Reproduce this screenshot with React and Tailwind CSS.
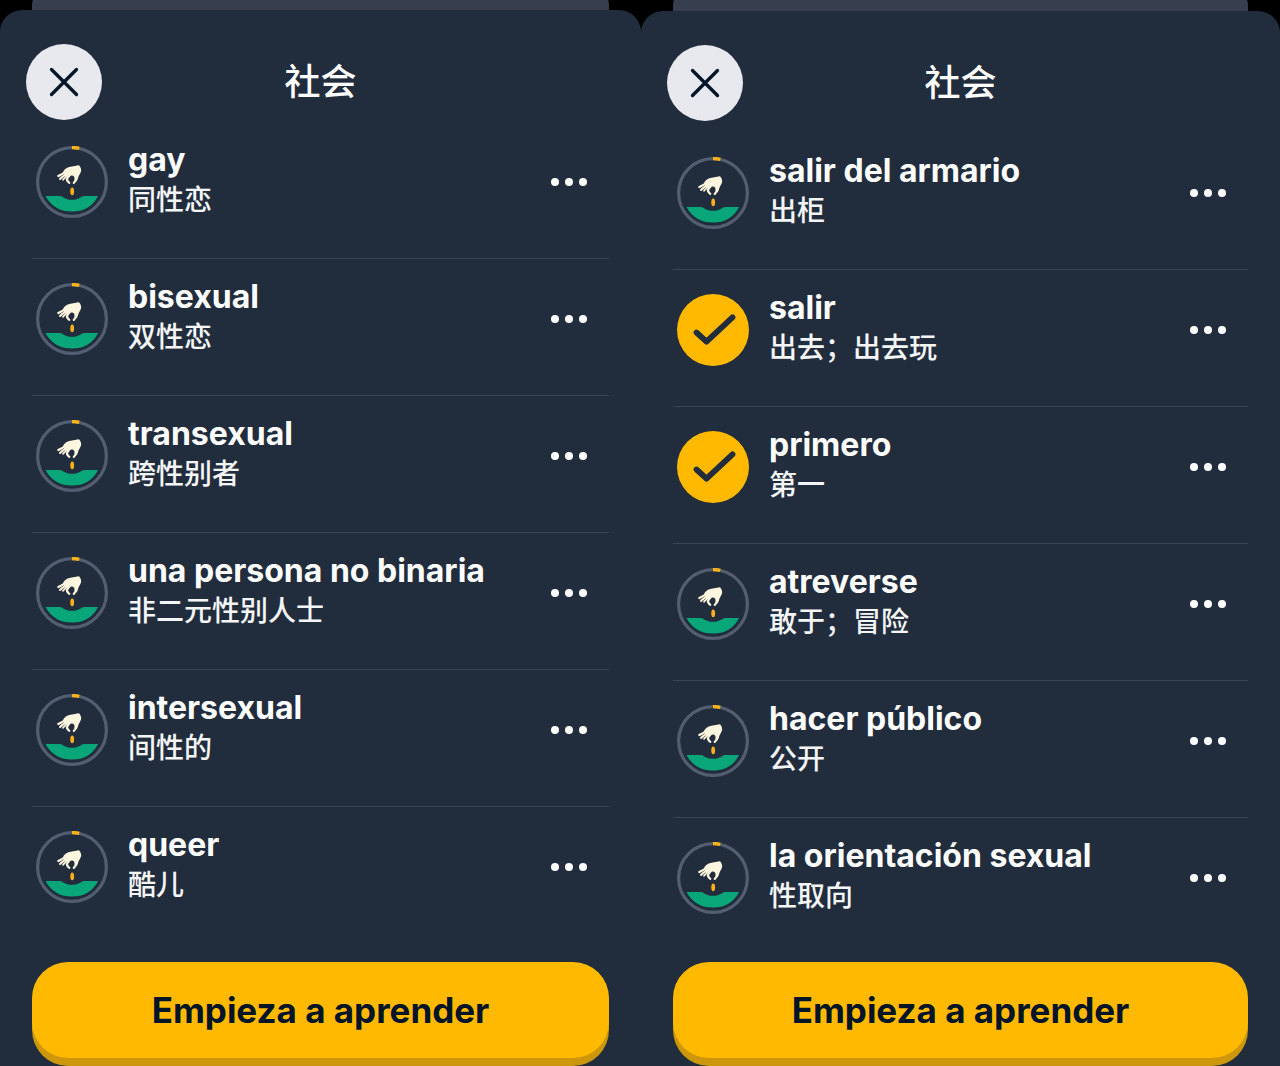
import React from 'react';

const panels = [
    {
        id: 'left',
        title: '社会',
        sheet: 'mt-[10px]',
        list: 'mt-[2px]',
        words: [
            { term: 'gay', meaning: '同性恋' },
            { term: 'bisexual', meaning: '双性恋' },
            { term: 'transexual', meaning: '跨性别者' },
            { term: 'una persona no binaria', meaning: '非二元性别人士' },
            { term: 'intersexual', meaning: '间性的' },
            { term: 'queer', meaning: '酷儿' },
        ],
    },
    {
        id: 'right',
        title: '社会',
        sheet: 'mt-[11px]',
        list: 'mt-[12px]',
        words: [
            { term: 'salir del armario', meaning: '出柜' },
            { term: 'salir', meaning: '出去；出去玩', learned: true },
            { term: 'primero', meaning: '第一', learned: true },
            { term: 'atreverse', meaning: '敢于；冒险' },
            { term: 'hacer público', meaning: '公开' },
            { term: 'la orientación sexual', meaning: '性取向' },
        ],
    },
];

const SeedIcon = () => (
    <svg viewBox="0 0 72 72" className="w-[72px] h-[72px] shrink-0" fill="none" aria-hidden="true">
        <circle cx="36" cy="36" r="34.4" stroke="#535e71" strokeWidth="3.2" />
        <path d="M36 1.6a34.4 34.4 0 0 1 7.3.8" stroke="#fcb316" strokeWidth="3.4" />
        <path d="M9.5 50H24c2.500 0 4.500 3.800 12 3.800S45.500 50 48 50H62C57 60.500 47.500 65.600 36 65.600S15 60.500 9.500 50Z" fill="#08a678" />
        <ellipse cx="36.200" cy="45.300" rx="1.900" ry="3.900" fill="#fcb01c" />
        {/* Palm, then fingers */}
        <path
            d="M27.500 25c2-2.700 4.200-3.600 7-4.200l7-1.400c1.200-.2 2 .2 2.500 1.200.6 1.200 1.200 2.400 1.200 3.600 0 1.600-1.200 3.400-2.200 5.400-.8 1.700-1.200 3.800-2.200 5.600l-2.400-1.500c.5-2.200-.4-4-2.600-4.100-1.500-.1-2.700.8-3.500 1.900L28 30Z"
            fill="#fff6df"
        />
        <g stroke="#fff6df" strokeLinecap="round" strokeLinejoin="round">
            <path d="M29 25.500C27.500 28 25 28.300 22.300 30" strokeWidth="2.200" />
            <path d="M30 28C28 30 25.800 31 24 33" strokeWidth="1.900" />
            <path d="M32.500 28.500C30 30.500 28.800 32 27 33.800" strokeWidth="1.700" />
            <path d="M33.500 29.500C31.500 31.500 30.500 32.500 31 34 31.500 35.200 32.500 36 33.200 36.800" strokeWidth="2.200" />
            <path d="M40.500 31.500C40.200 34 39 36 37.800 36.900" strokeWidth="2.200" />
        </g>
    </svg>
);

const LearnedIcon = () => (
    <svg viewBox="0 0 72 72" className="w-[72px] h-[72px] shrink-0" fill="none" aria-hidden="true">
        <circle cx="36" cy="36" r="36" fill="#ffb900" />
        <path d="M19.500 38.500 29.500 47.600 55.500 23.300" stroke="#212d3c" strokeWidth="5.800" strokeLinecap="round" strokeLinejoin="round" />
    </svg>
);

const WordRow = ({ word }) => (
    <li className="flex items-start h-[137px] pt-6 pl-1 border-b border-[#3a4454] last:border-transparent">
        {word.learned ? <LearnedIcon /> : <SeedIcon />}
        <div className="ml-5 -mt-2 flex-1 min-w-0">
            <div className="text-[32px] leading-[44px] font-bold text-[#fdfdfe]">{word.term}</div>
            <div className="text-[28px] leading-[36px] font-medium text-[#f4f5f7]">{word.meaning}</div>
        </div>
        <button className="h-[72px] px-[22px] flex items-center shrink-0" aria-label="Más opciones">
            <svg viewBox="0 0 36 8" className="w-9 h-2" fill="#ffffff" aria-hidden="true">
                <circle cx="4" cy="4" r="4" />
                <circle cx="18" cy="4" r="4" />
                <circle cx="32" cy="4" r="4" />
            </svg>
        </button>
    </li>
);

const Panel = ({ panel }) => (
    <section className="relative flex flex-col overflow-hidden">
        {/* Sheet stacked behind this one */}
        <div className="absolute -top-4 inset-x-8 h-12 rounded-t-[22px] bg-[#373f4e]" />
        <div className={`relative flex-1 flex flex-col bg-[#212d3c] rounded-t-[22px] ${panel.sheet}`}>
            <header className="grid grid-cols-[76px_1fr_76px] items-center px-[26px] pt-[34px]">
                <button className="w-[76px] h-[76px] rounded-full bg-[#e8e9ef] flex items-center justify-center" aria-label="Cerrar">
                    <svg viewBox="0 0 28 28" className="w-7 h-7 overflow-visible" fill="none" stroke="#021428" strokeWidth="3.300" strokeLinecap="round" aria-hidden="true">
                        <path d="M1.500 1.500 26.500 26.500M26.500 1.500 1.500 26.500" />
                    </svg>
                </button>
                <h1 className="text-center text-[36px] leading-[48px] font-medium text-white">{panel.title}</h1>
            </header>
            <ul className={`px-8 ${panel.list}`}>
                {panel.words.map((word) => (
                    <WordRow key={word.term} word={word} />
                ))}
            </ul>
            <div className="mt-auto px-8 pt-[7px] pb-2">
                <button className="w-full h-24 rounded-[36px] bg-[#ffb900] text-[35px] font-bold text-[#021428] shadow-[0_8px_0_#cc970c]">
                    Empieza a aprender
                </button>
            </div>
        </div>
    </section>
);

export default function App() {
    return (
        <main className="min-h-screen grid grid-cols-[641fr_639fr] bg-black font-['Inter','Noto_Sans_CJK_SC',sans-serif]" lang="zh-CN">
            {panels.map((panel) => (
                <Panel key={panel.id} panel={panel} />
            ))}
        </main>
    );
}
